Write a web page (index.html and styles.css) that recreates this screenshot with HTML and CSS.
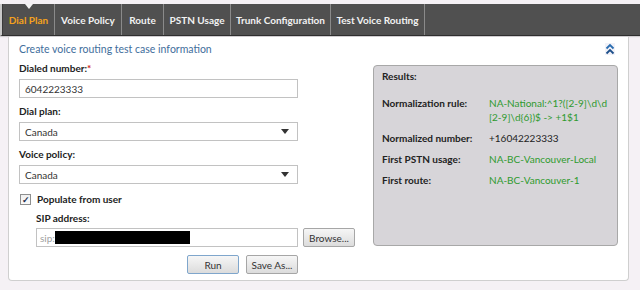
FILE: index.html
```html
<!DOCTYPE html>
<html lang="en">
<head>
  <meta charset="UTF-8" />
  <title>Test Voice Routing</title>
  <link rel="stylesheet" href="styles.css">
</head>
<body>

  <!-- Tabs -->
  <div class="tabbar">
    <div class="tab active" style="width: 52px">Dial Plan</div>
    <div class="tab" style="width: 67px">Voice Policy</div>
    <div class="tab" style="width: 42px">Route</div>
    <div class="tab" style="width: 67px">PSTN Usage</div>
    <div class="tab" style="width: 100px">Trunk Configuration</div>
    <div class="tab" style="width: 95px">Test Voice Routing</div>
  </div>

  <div class="panel">
    <div class="panel-head">
      <span class="title">Create voice routing test case information</span>
      <svg class="collapse" width="10" height="12" viewBox="0 0 10 12">
        <path d="M1.5 5.5 L5 2 L8.5 5.5" fill="none" stroke="#2a6db0" stroke-width="1.8"/>
        <path d="M1.5 10.5 L5 7 L8.5 10.5" fill="none" stroke="#1d4f8a" stroke-width="1.8"/>
      </svg>
    </div>

    <div class="panel-body">
      <div class="form">
        <label class="lbl">Dialed number:<span class="req">*</span></label>
        <input class="field" type="text" value="6042223333" />

        <label class="lbl">Dial plan:</label>
        <div class="select">Canada<span class="arrow"></span></div>

        <label class="lbl">Voice policy:</label>
        <div class="select">Canada<span class="arrow"></span></div>

        <div class="check-row">
          <span class="checkbox">&#10003;</span>
          <span class="lbl-inline">Populate from user</span>
        </div>

        <div class="sip">
          <label class="lbl sip-lbl">SIP address:</label>
          <div class="sip-row">
            <div class="field sip-field"><span class="hint">sip:</span><span class="redact"></span></div>
            <button class="btn">Browse...</button>
          </div>
        </div>

        <div class="actions">
          <button class="btn run">Run</button>
          <button class="btn">Save As...</button>
        </div>
      </div>

      <div class="results">
        <div class="res-title">Results:</div>
        <div class="res-row">
          <span class="res-key">Normalization rule:</span>
          <span class="res-val ok">NA-National:^1?([2-9]\d\d<br>[2-9]\d{6})$ -&gt; +1$1</span>
        </div>
        <div class="res-row">
          <span class="res-key">Normalized number:</span>
          <span class="res-val">+16042223333</span>
        </div>
        <div class="res-row">
          <span class="res-key">First PSTN usage:</span>
          <span class="res-val ok">NA-BC-Vancouver-Local</span>
        </div>
        <div class="res-row">
          <span class="res-key">First route:</span>
          <span class="res-val ok">NA-BC-Vancouver-1</span>
        </div>
      </div>
    </div>
  </div>

</body>
</html>
```

FILE: styles.css
```css
body {
  margin: 0;
  padding: 0;
  font-family: Lato, 'Open Sans', sans-serif;
  font-size: 10px;
  color: #222;
  background: #f5f1f5;
  width: 640px;
  height: 290px;
  overflow: hidden;
}

/* tab strip */
.tabbar {
  margin-top: 4px;
  height: 31px;
  background: #505050;
  border-bottom: 1px solid #2e2e2e;
  border-left: 2px solid #c8c8c8;
  display: flex;
  box-shadow: 0 1px 1px rgba(0, 0, 0, 0.15);
}

.tab {
  position: relative;
  display: flex;
  align-items: center;
  justify-content: center;
  box-sizing: border-box;
  flex: none;
  border-left: 1px solid #8a8a8a;
  color: #f2f2f2;
  font-weight: 700;
  font-size: 10px;
  white-space: nowrap;
}

.tab:first-child {
  border-left: 1px solid #3a3a3a;
}

.tab:last-child {
  border-right: 1px solid #8a8a8a;
}

.tab.active {
  color: #f4a21c;
}

.tab.active::before {
  content: "";
  position: absolute;
  top: 0;
  left: 22px;
  border-left: 4px solid transparent;
  border-right: 4px solid transparent;
  border-top: 5px solid #f4f4f4;
}

/* panel */
.panel {
  margin: 1px 11px 0 8px;
  height: 244px;
  background: #fff;
  border: 1px solid #cfcfcf;
  border-top: none;
  border-radius: 0 0 4px 4px;
  padding: 0 10px;
  box-sizing: border-box;
}

.panel-head {
  display: flex;
  justify-content: space-between;
  align-items: center;
  height: 13px;
  padding-top: 5px;
}

.title {
  color: #3f6e9c;
  font-size: 10.5px;
}

.collapse {
  margin-right: 3px;
  background: #f2f2f8;
}

.panel-body {
  display: flex;
  justify-content: space-between;
}

.form {
  width: 336px;
  display: flex;
  flex-direction: column;
}

.lbl {
  display: block;
  font-weight: 700;
  margin: 6px 0 4px;
  line-height: 14px;
}

.req {
  color: #d02020;
}

.field {
  width: 279px;
  height: 19px;
  box-sizing: border-box;
  border: 1px solid #c2c2c2;
  font-family: inherit;
  font-size: 10px;
  color: #333;
  padding: 0 5px;
  margin: 0;
  outline: none;
}

.select {
  width: 279px;
  height: 19px;
  box-sizing: border-box;
  border: 1px solid #c2c2c2;
  padding: 0 5px;
  display: flex;
  align-items: center;
  justify-content: space-between;
  color: #333;
}

.arrow {
  border-left: 4px solid transparent;
  border-right: 4px solid transparent;
  border-top: 5px solid #333;
  margin-right: 3px;
}

.check-row {
  display: flex;
  align-items: center;
  gap: 6px;
  margin: 9px 0 0 1px;
  height: 12px;
}

.checkbox {
  width: 11px;
  height: 11px;
  box-sizing: border-box;
  border: 1px solid #8e8f8f;
  background: linear-gradient(to bottom, #f0f0f0, #fafafa);
  font-size: 9px;
  line-height: 9px;
  text-align: center;
  color: #1e2e4e;
  font-weight: 700;
}

.lbl-inline {
  font-weight: 700;
  font-size: 10px;
}

.sip {
  margin-left: 17px;
}

.sip-lbl {
  margin: 6px 0 3px;
}

.sip-row {
  display: flex;
  gap: 5px;
}

.sip-field {
  width: 262px;
  display: flex;
  align-items: center;
  padding: 0 3px;
}

.hint {
  color: #a0a0a0;
}

.redact {
  width: 135px;
  height: 13px;
  background: #000;
}

.btn {
  height: 19px;
  box-sizing: border-box;
  border: 1px solid #a6a6a6;
  border-radius: 2px;
  background: linear-gradient(to bottom, #f6f6f6, #dcdcdc);
  font-family: inherit;
  font-size: 10px;
  color: #333;
  padding: 0;
  width: 52px;
  white-space: nowrap;
  cursor: pointer;
}

.actions {
  display: flex;
  gap: 7px;
  margin: 8px 0 0 168px;
}

.run {
  border-color: #7fa6cc;
}

/* results */
.results {
  width: 245px;
  height: 181px;
  margin-top: 10px;
  box-sizing: border-box;
  background: #d7d5d9;
  border: 1px solid #a8a8a8;
  border-radius: 4px;
  padding: 3px 8px;
}

.res-title {
  font-weight: 700;
  line-height: 14px;
  margin-bottom: 13px;
}

.res-row {
  display: flex;
  margin-bottom: 7px;
  line-height: 14px;
}

.res-key {
  width: 107px;
  flex-shrink: 0;
  font-weight: 700;
}

.res-val {
  color: #222;
}

.res-val.ok {
  color: #2e9a2e;
}
```
